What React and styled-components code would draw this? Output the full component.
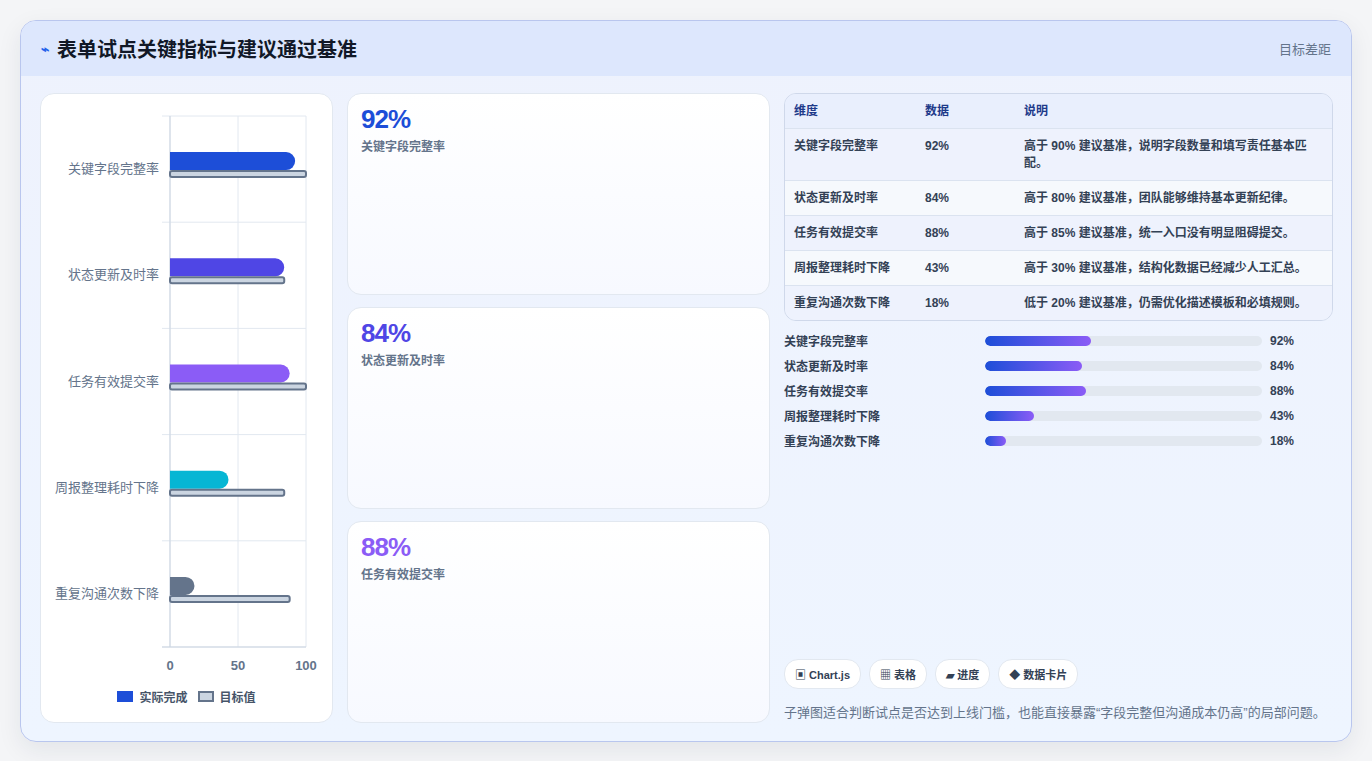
import React from "react";
import styled, { createGlobalStyle } from "styled-components";

const Global = createGlobalStyle`
  html, body { margin: 0; background: #f4f5f7; }
  body { font-family: "Liberation Sans", "Noto Sans CJK SC", sans-serif; }
`;

const Page = styled.div`
  padding: 20px 20px 21px 20px;
  box-sizing: border-box;
  height: 761px;
`;

const Frame = styled.div`
  height: 720px;
  border: 1px solid #b9c6ee;
  border-radius: 16px;
  background: linear-gradient(180deg, #eef2fd 0%, #eef5ff 100%);
  box-shadow: 0 8px 24px rgba(30, 41, 59, 0.08);
  overflow: hidden;
  display: flex;
  flex-direction: column;
`;

const Header = styled.div`
  height: 55px;
  background: #dde7fd;
  display: flex;
  align-items: center;
  justify-content: space-between;
  padding: 0 20px;
  flex-shrink: 0;
`;

const Title = styled.h1`
  margin: 0;
  font-size: 20px;
  font-weight: 700;
  color: #111827;
  display: flex;
  align-items: center;
  gap: 8px;
`;

const Bolt = styled.span`
  color: #2563eb;
  font-size: 14px;
`;

const HeaderNote = styled.span`
  font-size: 13px;
  color: #64748b;
`;

const Body = styled.div`
  flex: 1;
  display: grid;
  grid-template-columns: 293px 423px 1fr;
  gap: 14px;
  padding: 17px 18px 18px 19px;
  min-height: 0;
`;

const ChartCard = styled.div`
  background: #fff;
  border: 1px solid #e2e8f0;
  border-radius: 14px;
  display: flex;
  flex-direction: column;
  align-items: center;
  padding-top: 20px;
`;

const Legend = styled.div`
  display: flex;
  gap: 10px;
  font-size: 12px;
  font-weight: 700;
  color: #475569;
  margin-top: 4px;
`;

const LegendItem = styled.span`
  display: flex;
  align-items: center;
  gap: 6px;
`;

const Swatch = styled.span`
  width: 16px;
  height: 11px;
  background: ${(p) => (p.$target ? "#cbd5e1" : "#1d4ed8")};
  border: ${(p) => (p.$target ? "2px solid #64748b" : "none")};
  box-sizing: border-box;
`;

const Cards = styled.div`
  display: grid;
  grid-template-rows: repeat(3, 1fr);
  gap: 12px;
`;

const StatCard = styled.div`
  background: linear-gradient(180deg, #ffffff 0%, #f7f9ff 100%);
  border: 1px solid #e2e8f0;
  border-radius: 14px;
  padding: 10px 13px;
`;

const StatValue = styled.div`
  font-size: 26px;
  font-weight: 700;
  letter-spacing: -1px;
  color: ${(p) => p.$color};
`;

const StatLabel = styled.div`
  font-size: 12px;
  font-weight: 700;
  color: #64748b;
  margin-top: 2px;
`;

const Right = styled.div`
  display: flex;
  flex-direction: column;
`;

const Table = styled.div`
  border: 1px solid #cfd8ea;
  border-radius: 12px;
  overflow: hidden;
  font-size: 12px;
  font-weight: 700;
  color: #334155;
`;

const Row = styled.div`
  display: grid;
  grid-template-columns: 131px 99px 1fr;
  padding: 9px 9px 8px 9px;
  line-height: 17px;
  background: ${(p) => p.$bg};
  border-top: ${(p) => (p.$first ? "none" : "1px solid #dbe3f0")};
  color: ${(p) => (p.$head ? "#1e3a8a" : "#334155")};
`;

const Bars = styled.div`
  display: flex;
  flex-direction: column;
  gap: 8px;
  margin-top: 11px;
`;

const BarRow = styled.div`
  display: grid;
  grid-template-columns: 201px 277px 1fr;
  align-items: center;
  gap: 0;
  font-size: 12px;
  font-weight: 700;
  color: #334155;
  height: 17px;
`;

const Track = styled.div`
  height: 10px;
  background: #e2e8f0;
  border-radius: 5px;
  overflow: hidden;
`;

const Fill = styled.div`
  height: 100%;
  border-radius: 5px;
  background: linear-gradient(90deg, #1d4ed8, #8b5cf6);
`;

const BarValue = styled.span`
  padding-left: 8px;
`;

const Spacer = styled.div`
  flex: 1;
`;

const Chips = styled.div`
  display: flex;
  gap: 8px;
`;

const Chip = styled.span`
  height: 28px;
  padding: 0 10px;
  border: 1px solid #e2e8f0;
  border-radius: 14px;
  background: #fff;
  display: flex;
  align-items: center;
  font-size: 11px;
  font-weight: 700;
  color: #334155;
`;

const Footnote = styled.p`
  margin: 13px 0 2px;
  font-size: 13px;
  color: #64748b;
`;

const metrics = [
  { name: "关键字段完整率", v: 92, t: 100, c: "#1d4ed8", note: "高于 90% 建议基准，说明字段数量和填写责任基本匹配。" },
  { name: "状态更新及时率", v: 84, t: 84, c: "#4f46e5", note: "高于 80% 建议基准，团队能够维持基本更新纪律。" },
  { name: "任务有效提交率", v: 88, t: 100, c: "#8b5cf6", note: "高于 85% 建议基准，统一入口没有明显阻碍提交。" },
  { name: "周报整理耗时下降", v: 43, t: 84, c: "#06b6d4", note: "高于 30% 建议基准，结构化数据已经减少人工汇总。" },
  { name: "重复沟通次数下降", v: 18, t: 88, c: "#64748b", note: "低于 20% 建议基准，仍需优化描述模板和必填规则。" },
];

function BulletChart() {
  const x0 = 130, w = 136, top = 2, step = 106.2;
  const sx = (v) => (v / 100) * w;
  return (
    <svg width="293" height="570" viewBox="0 0 293 570">
      {[0, 50, 100].map((t) => (
        <line key={t} x1={x0 + sx(t)} x2={x0 + sx(t)} y1={top} y2={top + 531} stroke="#e2e8f0" />
      ))}
      {[0, 1, 2, 3, 4, 5].map((i) => (
        <line key={i} x1={x0 - 8} x2={x0 + w} y1={top + i * step} y2={top + i * step} stroke="#e2e8f0" />
      ))}
      <line x1={x0} x2={x0} y1={top} y2={top + 531} stroke="#cbd5e1" />
      <line x1={x0 - 8} x2={x0 + w} y1={top + 531} y2={top + 531} stroke="#cbd5e1" />
      {metrics.map((m, i) => {
        const cy = top + i * step + step / 2;
        const bw = sx(m.v);
        return (
          <g key={m.name}>
            <text x={x0 - 11} y={cy + 4} textAnchor="end" fontSize="13" fill="#64748b">{m.name}</text>
            <path d={`M${x0} ${cy - 17} H${x0 + bw - 9} A9 9 0 0 1 ${x0 + bw - 9} ${cy + 1} H${x0} Z`} fill={m.c} />
            <rect x={x0} y={cy + 2} width={sx(m.t)} height={6} rx="2" fill="#cbd5e1" stroke="#64748b" strokeWidth="2" />
          </g>
        );
      })}
      {[0, 50, 100].map((t) => (
        <text key={t} x={x0 + sx(t)} y={top + 554} textAnchor="middle" fontSize="13" fontWeight="700" fill="#64748b">{t}</text>
      ))}
    </svg>
  );
}

export default function App() {
  return (
    <>
      <Global />
      <Page>
        <Frame>
          <Header>
            <Title><Bolt>⌁</Bolt>表单试点关键指标与建议通过基准</Title>
            <HeaderNote>目标差距</HeaderNote>
          </Header>
          <Body>
            <ChartCard>
              <BulletChart />
              <Legend>
                <LegendItem><Swatch />实际完成</LegendItem>
                <LegendItem><Swatch $target />目标值</LegendItem>
              </Legend>
            </ChartCard>
            <Cards>
              {metrics.slice(0, 3).map((m) => (
                <StatCard key={m.name}>
                  <StatValue $color={m.c}>{m.v}%</StatValue>
                  <StatLabel>{m.name}</StatLabel>
                </StatCard>
              ))}
            </Cards>
            <Right>
              <Table>
                <Row $head $first $bg="#e9effd">
                  <span>维度</span><span>数据</span><span>说明</span>
                </Row>
                {metrics.map((m, i) => (
                  <Row key={m.name} $bg={i % 2 === 0 ? "#eef2fd" : "#f6f9fd"}>
                    <span>{m.name}</span><span>{m.v}%</span><span>{m.note}</span>
                  </Row>
                ))}
              </Table>
              <Bars>
                {metrics.map((m) => (
                  <BarRow key={m.name}>
                    <span>{m.name}</span>
                    <Track><Fill style={{ width: `${m.v * 0.415}%` }} /></Track>
                    <BarValue>{m.v}%</BarValue>
                  </BarRow>
                ))}
              </Bars>
              <Spacer />
              <Chips>
                <Chip>▣ Chart.js</Chip>
                <Chip>▦ 表格</Chip>
                <Chip>▰ 进度</Chip>
                <Chip>◆ 数据卡片</Chip>
              </Chips>
              <Footnote>子弹图适合判断试点是否达到上线门槛，也能直接暴露“字段完整但沟通成本仍高”的局部问题。</Footnote>
            </Right>
          </Body>
        </Frame>
      </Page>
    </>
  );
}
